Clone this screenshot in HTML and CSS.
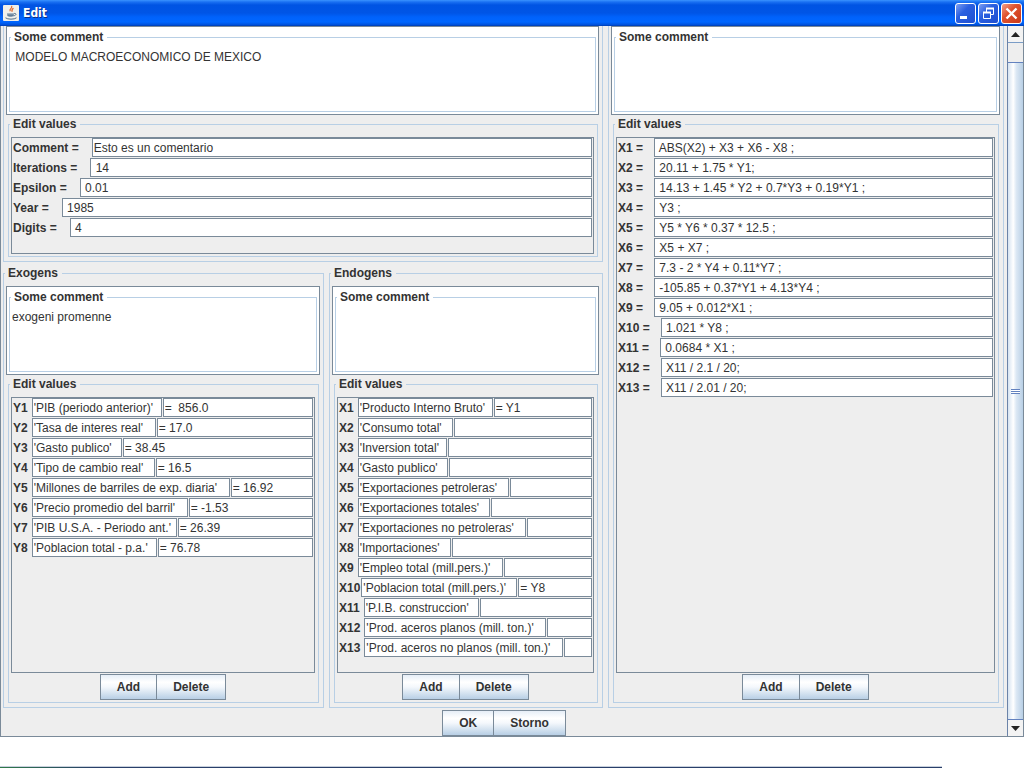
FILE: index.html
```html
<!DOCTYPE html>
<html lang="es">
<head>
<meta charset="utf-8">
<title>Edit</title>
<link rel="stylesheet" href="styles.css">
</head>
<body>
<div class="window">
  <header class="titlebar">
    <svg class="app-icon" viewBox="0 0 16 16" width="16" height="16" aria-hidden="true">
      <rect x="0" y="0" width="16" height="16" rx="1" fill="#f1efe9"/>
      <path d="M8.500 1c1.800 2-2.800 2.800-1.300 5.200M10.500 3.200c-2 1-1.900 1.900-1.300 3.600" fill="none" stroke="#e0662a" stroke-width="1.200"/>
      <path d="M4 8.300h7c0 3-.8 3.700-3.400 3.700S4 11.300 4 8.300z" fill="#8ba0b4"/>
      <path d="M11 8.500c2.800-.5 2.600 2-.5 2.300M2.500 12.800c2 1.800 9 1.800 11 0M4.500 10.200h6" fill="none" stroke="#526f8c" stroke-width="1"/>
    </svg>
    <h1 class="title">Edit</h1>
    <div class="controls">
      <button class="control" type="button" aria-label="Minimize"><svg viewBox="0 0 19 19" width="19" height="19"><path d="M4 13.500h7" stroke="#fff" stroke-width="3"/></svg></button>
      <button class="control" type="button" aria-label="Restore"><svg viewBox="0 0 19 19" width="19" height="19"><path d="M7.500 8V4.500h7v6H12M4.500 8.500h7v6h-7z" fill="none" stroke="#fff"/><path d="M7 4.500h8M4 8.500h8" stroke="#fff" stroke-width="2"/></svg></button>
      <button class="control control-close" type="button" aria-label="Close"><svg viewBox="0 0 19 19" width="19" height="19"><path d="M4.500 4.500l10 10M14.500 4.500l-10 10" stroke="#fff" stroke-width="2.400"/></svg></button>
    </div>
  </header>
  <div class="body">
    <form class="content">
      <div class="columns">
        <div class="left">
          <section class="group group-open">
            <div class="note"><fieldset class="note-frame"><legend>Some comment</legend><textarea aria-label="Model comment"> MODELO MACROECONOMICO DE MEXICO</textarea></fieldset></div>
            <fieldset class="values">
              <legend>Edit values</legend>
              <div class="pane pane-params">
                <div class="row"><label for="p1">Comment =</label><input id="p1" value="Esto es un comentario"></div>
                <div class="row"><label for="p2">Iterations =</label><input id="p2" value=" 14"></div>
                <div class="row"><label for="p3">Epsilon =</label><input id="p3" value=" 0.01"></div>
                <div class="row"><label for="p4">Year =</label><input id="p4" value=" 1985"></div>
                <div class="row"><label for="p5">Digits =</label><input id="p5" value=" 4"></div>
              </div>
            </fieldset>
          </section>
          <div class="pair">
            <fieldset class="group">
              <legend>Exogens</legend>
              <div class="note"><fieldset class="note-frame"><legend>Some comment</legend><textarea aria-label="Exogens comment">exogeni promenne</textarea></fieldset></div>
              <fieldset class="values">
                <legend>Edit values</legend>
                <div class="pane">
                  <div class="row"><label for="y1">Y1</label><input id="y1" style="width:130px" value="'PIB (periodo anterior)'"><input aria-label="Y1 value" value="=  856.0"></div>
                  <div class="row"><label for="y2">Y2</label><input id="y2" style="width:124px" value="'Tasa de interes real'"><input aria-label="Y2 value" value="= 17.0"></div>
                  <div class="row"><label for="y3">Y3</label><input id="y3" style="width:90px" value="'Gasto publico'"><input aria-label="Y3 value" value="= 38.45"></div>
                  <div class="row"><label for="y4">Y4</label><input id="y4" style="width:123px" value="'Tipo de cambio real'"><input aria-label="Y4 value" value="= 16.5"></div>
                  <div class="row"><label for="y5">Y5</label><input id="y5" style="width:198px" value="'Millones de barriles de exp. diaria'"><input aria-label="Y5 value" value="= 16.92"></div>
                  <div class="row"><label for="y6">Y6</label><input id="y6" style="width:156px" value="'Precio promedio del barril'"><input aria-label="Y6 value" value="= -1.53"></div>
                  <div class="row"><label for="y7">Y7</label><input id="y7" style="width:145px" value="'PIB U.S.A. - Periodo ant.'"><input aria-label="Y7 value" value="= 26.39"></div>
                  <div class="row"><label for="y8">Y8</label><input id="y8" style="width:125px" value="'Poblacion total - p.a.'"><input aria-label="Y8 value" value="= 76.78"></div>
                </div>
                <div class="actions"><button class="btn" type="button">Add</button><button class="btn" type="button">Delete</button></div>
              </fieldset>
            </fieldset>
            <fieldset class="group">
              <legend>Endogens</legend>
              <div class="note"><fieldset class="note-frame"><legend>Some comment</legend><textarea aria-label="Endogens comment"></textarea></fieldset></div>
              <fieldset class="values">
                <legend>Edit values</legend>
                <div class="pane">
                  <div class="row"><label for="x1">X1</label><input id="x1" style="width:135px" value="'Producto Interno Bruto'"><input aria-label="X1 value" value="= Y1"></div>
                  <div class="row"><label for="x2">X2</label><input id="x2" style="width:95px" value="'Consumo total'"><input aria-label="X2 value"></div>
                  <div class="row"><label for="x3">X3</label><input id="x3" style="width:89px" value="'Inversion total'"><input aria-label="X3 value"></div>
                  <div class="row"><label for="x4">X4</label><input id="x4" style="width:90px" value="'Gasto publico'"><input aria-label="X4 value"></div>
                  <div class="row"><label for="x5">X5</label><input id="x5" style="width:151px" value="'Exportaciones petroleras'"><input aria-label="X5 value"></div>
                  <div class="row"><label for="x6">X6</label><input id="x6" style="width:132px" value="'Exportaciones totales'"><input aria-label="X6 value"></div>
                  <div class="row"><label for="x7">X7</label><input id="x7" style="width:168px" value="'Exportaciones no petroleras'"><input aria-label="X7 value"></div>
                  <div class="row"><label for="x8">X8</label><input id="x8" style="width:93px" value="'Importaciones'"><input aria-label="X8 value"></div>
                  <div class="row"><label for="x9">X9</label><input id="x9" style="width:145px" value="'Empleo total (mill.pers.)'"><input aria-label="X9 value"></div>
                  <div class="row row-tight"><label for="x10">X10</label><input id="x10" style="width:156px" value="'Poblacion total (mill.pers.)'"><input aria-label="X10 value" value="= Y8"></div>
                  <div class="row"><label for="x11">X11</label><input id="x11" style="width:115px" value="'P.I.B. construccion'"><input aria-label="X11 value"></div>
                  <div class="row"><label for="x12">X12</label><input id="x12" style="width:182px" value="'Prod. aceros planos (mill. ton.)'"><input aria-label="X12 value"></div>
                  <div class="row"><label for="x13">X13</label><input id="x13" style="width:199px" value="'Prod. aceros no planos (mill. ton.)'"><input aria-label="X13 value"></div>
                </div>
                <div class="actions"><button class="btn" type="button">Add</button><button class="btn" type="button">Delete</button></div>
              </fieldset>
            </fieldset>
          </div>
        </div>
        <section class="group group-open">
          <div class="note"><fieldset class="note-frame"><legend>Some comment</legend><textarea aria-label="Equations comment"></textarea></fieldset></div>
          <fieldset class="values">
            <legend>Edit values</legend>
            <div class="pane pane-equations">
              <div class="row"><label for="e1">X1 =</label><input id="e1" value=" ABS(X2) + X3 + X6 - X8 ;"></div>
              <div class="row"><label for="e2">X2 =</label><input id="e2" value=" 20.11 + 1.75 * Y1;"></div>
              <div class="row"><label for="e3">X3 =</label><input id="e3" value=" 14.13 + 1.45 * Y2 + 0.7*Y3 + 0.19*Y1 ;"></div>
              <div class="row"><label for="e4">X4 =</label><input id="e4" value=" Y3 ;"></div>
              <div class="row"><label for="e5">X5 =</label><input id="e5" value=" Y5 * Y6 * 0.37 * 12.5 ;"></div>
              <div class="row"><label for="e6">X6 =</label><input id="e6" value=" X5 + X7 ;"></div>
              <div class="row"><label for="e7">X7 =</label><input id="e7" value=" 7.3 - 2 * Y4 + 0.11*Y7 ;"></div>
              <div class="row"><label for="e8">X8 =</label><input id="e8" value=" -105.85 + 0.37*Y1 + 4.13*Y4 ;"></div>
              <div class="row"><label for="e9">X9 =</label><input id="e9" value=" 9.05 + 0.012*X1 ;"></div>
              <div class="row"><label for="e10">X10 =</label><input id="e10" value=" 1.021 * Y8 ;"></div>
              <div class="row"><label for="e11">X11 =</label><input id="e11" value=" 0.0684 * X1 ;"></div>
              <div class="row"><label for="e12">X12 =</label><input id="e12" value=" X11 / 2.1 / 20;"></div>
              <div class="row"><label for="e13">X13 =</label><input id="e13" value=" X11 / 2.01 / 20;"></div>
            </div>
            <div class="actions"><button class="btn" type="button">Add</button><button class="btn" type="button">Delete</button></div>
          </fieldset>
        </section>
      </div>
      <div class="footer"><button class="btn" type="button">OK</button><button class="btn" type="button">Storno</button></div>
    </form>
    <div class="scrollbar">
      <button class="step" type="button" aria-label="Scroll up"><svg viewBox="0 0 9 5" width="9" height="5"><path d="M4.500 0L9 5H0z" fill="#222"/></svg></button>
      <div class="space"></div>
      <div class="thumb"><span class="grip"></span></div>
      <button class="step" type="button" aria-label="Scroll down"><svg viewBox="0 0 9 5" width="9" height="5"><path d="M4.500 5L9 0H0z" fill="#222"/></svg></button>
    </div>
  </div>
</div>
<div class="desktop"><div class="desktop-edge"></div></div>
</body>
</html>
```
FILE: styles.css
```css
* { box-sizing: border-box; }

body {
  display: flex;
  flex-direction: column;
  min-height: 100vh;
  margin: 0;
  background: #fff;
  color: #333;
  font: 12px/15px "Liberation Sans", Arial, sans-serif;
}

button, input, textarea { font: inherit; color: inherit; margin: 0; }
fieldset { min-width: 0; margin: 0; padding: 0; border: 1px solid #b8cfe5; }
legend { height: 15px; margin-left: -1px; padding: 0 4px 0 3px; font-weight: bold; }

.window { flex: 1; display: flex; flex-direction: column; }

.titlebar {
  display: flex;
  align-items: center;
  gap: 4px;
  height: 26px;
  padding: 0 2px 0 3px;
  background: linear-gradient(#3a93ff 0, #1a70f2 2px, #0054e3 5px, #0055e6 13px, #0062fb 17px, #0066ff 22px, #0050d8 25px, #0039a8 26px);
}
.app-icon { flex: none; }
.title {
  flex: 1;
  margin: 0;
  color: #fff;
  font: bold 12px/16px "DejaVu Sans Condensed", "Liberation Sans", sans-serif;
  text-shadow: 1px 1px #0b2f85;
}
.controls { display: flex; gap: 2px; }
.control {
  width: 21px;
  height: 21px;
  padding: 0;
  border: 1px solid #fff;
  border-radius: 3px;
  background: linear-gradient(135deg, #7d9ff3, #2a5fe0 40%, #1f4fd0);
}
.control svg { display: block; }
.control-close { background: linear-gradient(135deg, #f0a08a, #e0532f 40%, #c9381a); }

.body { flex: 1; display: flex; border: 1px solid #7a8a99; border-top: 0; background: #eee; }
.content { flex: 1; display: flex; flex-direction: column; min-width: 0; }
.columns {
  flex: 1;
  display: grid;
  grid-template-columns: 600fr 396fr;
  gap: 5px;
  padding: 0 3px 0 2px;
}
.left { display: flex; flex-direction: column; gap: 4px; min-width: 0; }
.pair { flex: 1; display: grid; grid-template-columns: 321fr 274fr; gap: 5px; }

.group { display: flex; flex-direction: column; padding: 5px 3px 4px 2px; min-width: 0; }
.group-open { border: 1px solid #b8cfe5; border-top: 0; padding-top: 0; }

.note { height: 89px; padding: 3px 2px 2px; border: 1px solid #7a8a99; background: #fff; }
.note-frame { height: 100%; }
.note-frame legend { margin-left: 1px; }
.note textarea {
  display: block;
  width: 100%;
  height: 64px;
  padding: 5px 2px 0;
  border: 0;
  outline: 0;
  background: transparent;
  resize: none;
}

.values {
  flex: 1;
  display: flex;
  flex-direction: column;
  margin: 2px 1px 0 2px;
  padding: 5px 3px 2px 2px;
}
.pane { flex: 1; padding: 0 1px 0 1px; border: 1px solid #7a8a99; }
.pane-params { min-height: 117px; }

.row { display: flex; gap: 1px; height: 20px; }
.row label { flex: none; padding: 3px 3px 0 0; font-weight: bold; white-space: nowrap; }
.row-tight label { padding-right: 0; }
.pane-params label { padding-right: 12px; }
.pane-equations label { padding-right: 10px; }
.row input {
  flex: none;
  height: 19px;
  min-width: 0;
  padding: 1px;
  border: 1px solid #7a8a99;
  background: #fff;
}
.row input:last-child { flex: 1; }

.actions, .footer { display: flex; justify-content: center; }
.actions { padding-top: 1px; }
.footer { padding: 2px 0 0; }
.btn {
  height: 26px;
  padding: 0 16px;
  border: 1px solid #7a8a99;
  background: linear-gradient(#e6eef7, #fff 30%, #f4f8fc 50%, #b8cfe5);
  font-weight: bold;
}
.btn + .btn { margin-left: -1px; }

.scrollbar {
  display: flex;
  flex-direction: column;
  width: 16px;
  border-left: 1px solid #6b83a8;
  background: #eee;
}
.step { height: 16px; padding: 0; border: 0; background: #f3f3f3; }
.step svg { display: block; margin: 0 auto; }
.space { height: 20px; border-top: 1px solid #7a9cc6; }
.thumb {
  flex: 1;
  display: flex;
  align-items: center;
  justify-content: center;
  border: solid #6382bf;
  border-width: 1px 0;
  background: linear-gradient(90deg, #d5e3f1, #fff 35%, #dce8f4 55%, #b8cfe5);
}
.grip { width: 9px; height: 5px; background: repeating-linear-gradient(#6382bf 0 1px, #fff 1px 2px); }

.desktop { display: flex; align-items: flex-end; height: 31px; background: #fff; }
.desktop-edge { width: 92%; height: 2px; background: linear-gradient(90deg, #2f7a4a, #2a3f6a 10%, #2a3f6a); border-top: 1px solid #c8d0dc; }
```
